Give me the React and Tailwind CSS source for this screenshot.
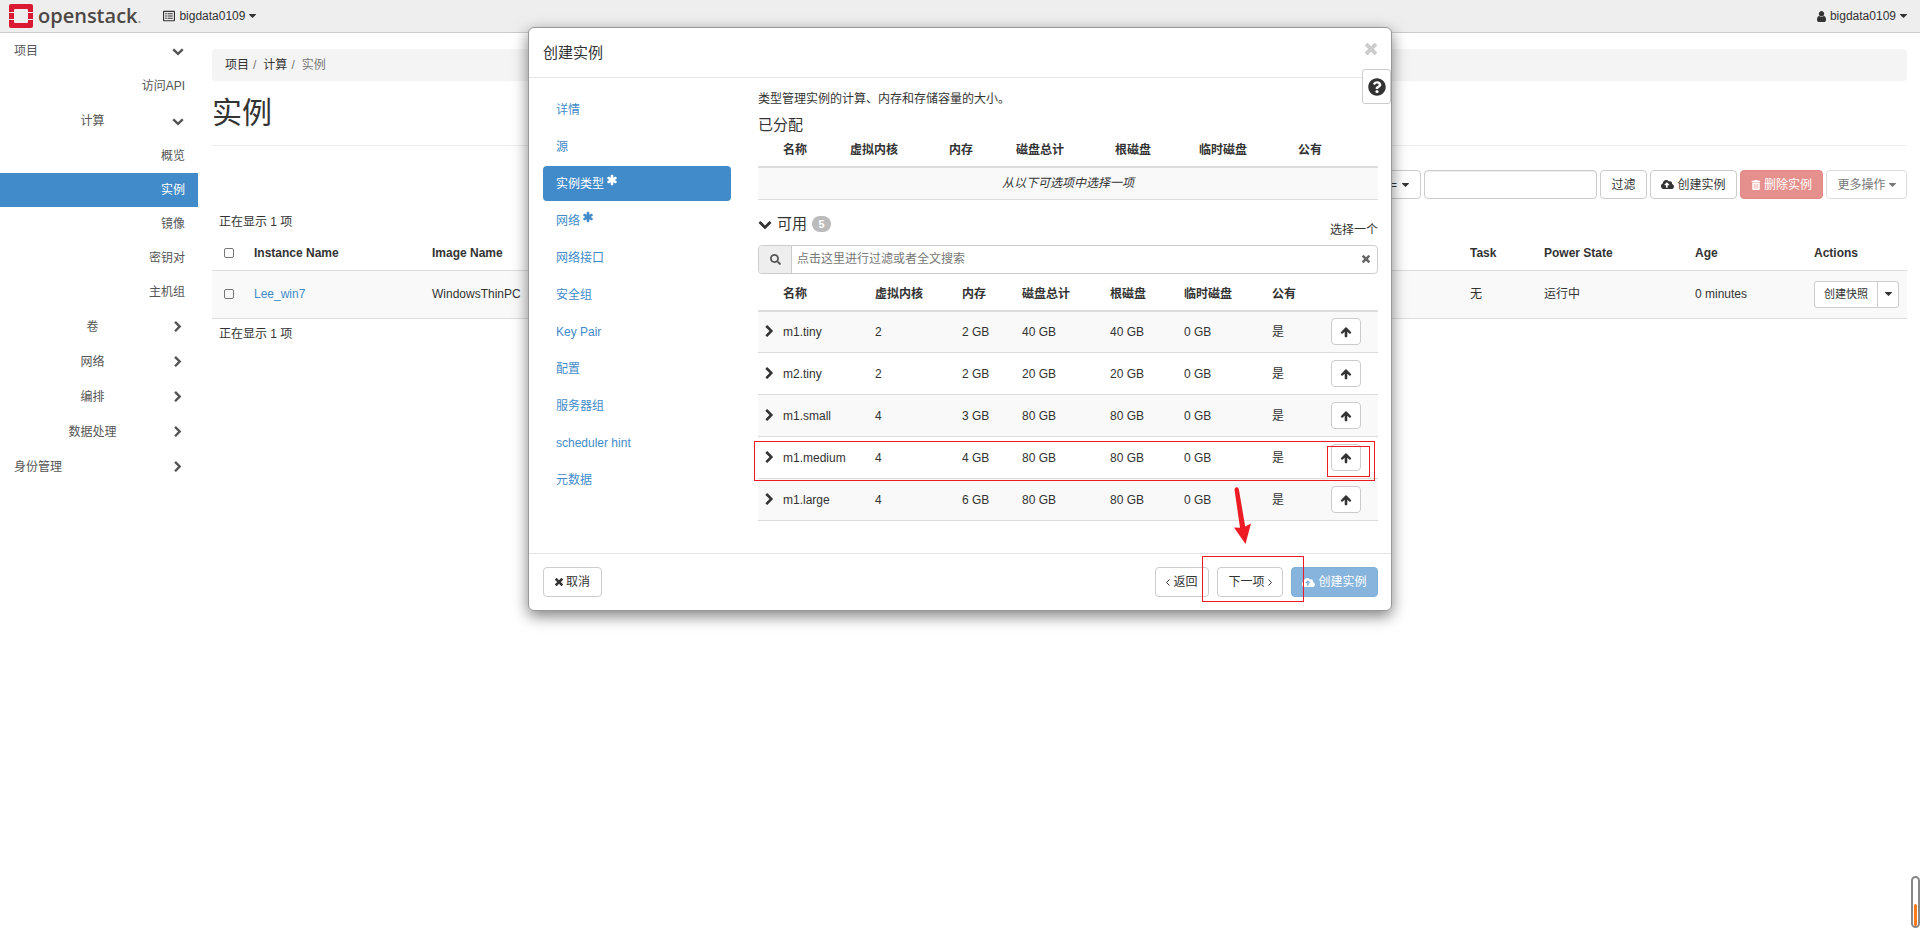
import React, { useState } from 'react';
import {
    FaCloudUploadAlt,
    FaQuestionCircle,
    FaRegListAlt,
    FaSearch,
    FaTrashAlt
} from 'react-icons/fa';

const menu = [
    { label: '项目', level: 'root', open: true },
    { label: '访问API', level: 'panel' },
    { label: '计算', level: 'group', open: true },
    { label: '概览', level: 'panel' },
    { label: '实例', level: 'leaf', active: true },
    { label: '镜像', level: 'leaf' },
    { label: '密钥对', level: 'leaf' },
    { label: '主机组', level: 'leaf' },
    { label: '卷', level: 'group' },
    { label: '网络', level: 'group' },
    { label: '编排', level: 'group' },
    { label: '数据处理', level: 'group' },
    { label: '身份管理', level: 'root' },
];

const steps = [
    { label: '详情' },
    { label: '源' },
    { label: '实例类型', required: true },
    { label: '网络', required: true },
    { label: '网络接口' },
    { label: '安全组' },
    { label: 'Key Pair' },
    { label: '配置' },
    { label: '服务器组' },
    { label: 'scheduler hint' },
    { label: '元数据' },
];

const flavors = [
    { name: 'm1.tiny', vcpus: 2, ram: '2 GB', total: '40 GB', root: '40 GB', ephemeral: '0 GB' },
    { name: 'm2.tiny', vcpus: 2, ram: '2 GB', total: '20 GB', root: '20 GB', ephemeral: '0 GB' },
    { name: 'm1.small', vcpus: 4, ram: '3 GB', total: '80 GB', root: '80 GB', ephemeral: '0 GB' },
    { name: 'm1.medium', vcpus: 4, ram: '4 GB', total: '80 GB', root: '80 GB', ephemeral: '0 GB' },
    { name: 'm1.large', vcpus: 4, ram: '6 GB', total: '80 GB', root: '80 GB', ephemeral: '0 GB' },
];

const flavorHeaders = ['名称', '虚拟内核', '内存', '磁盘总计', '根磁盘', '临时磁盘', '公有'];

// Font Awesome 4 shapes, heavier than the ones in react-icons
const Icon = ({ d, box = '0 0 1792 1792', w, h = w, className = '' }) => (
    <svg width={w} height={h} viewBox={box} fill="currentColor" className={`shrink-0 ${className}`} aria-hidden="true">
        <path d={d} />
    </svg>
);

const Caret = () => (
    <Icon w={7} h={4} box="384 640 1024 576" d="M1408 704q0 26-19 45l-448 448q-19 19-45 19t-45-19l-448-448q-19-19-19-45t19-45 45-19h896q26 0 45 19t19 45z" />
);

const ChevronDown = ({ size = 11 }) => (
    <Icon w={size} d="M1683 808l-742 741q-19 19-45 19t-45-19l-742-741q-19-19-19-45.500t19-45.500l166-165q19-19 45-19t45 19l531 531 531-531q19-19 45-19t45 19l166 165q19 19 19 45.500t-19 45.500z" />
);

const ChevronRight = ({ size = 12 }) => (
    <Icon w={size} d="M1363 877l-742 742q-19 19-45 19t-45-19l-166-166q-19-19-19-45t19-45l531-531-531-531q-19-19-19-45t19-45l166-166q19-19 45-19t45 19l742 742q19 19 19 45t-19 45z" />
);

const Times = ({ size = 8 }) => (
    <Icon w={size} box="302 366 1188 1188" d="M1490 1322q0 40-28 68l-136 136q-28 28-68 28t-68-28l-294-294-294 294q-28 28-68 28t-68-28l-136-136q-28-28-28-68t28-68l294-294-294-294q-28-28-28-68t28-68l136-136q28-28 68-28t68 28l294 294 294-294q28-28 68-28t68 28l136 136q28 28 28 68t-28 68l-294 294 294 294q28 28 28 68z" />
);

const ArrowUp = () => (
    <Icon w={12} d="M1675 971q0 51-37 90l-75 75q-38 38-91 38-54 0-90-38l-294-293v704q0 52-37.500 84.500t-90.500 32.500h-128q-53 0-90.500-32.500t-37.500-84.500v-704l-294 293q-36 38-90 38t-90-38l-75-75q-38-38-38-90 0-53 38-91l651-651q35-37 90-37 54 0 91 37l651 651q37 39 37 91z" />
);

const Asterisk = () => (
    <Icon w={12} className="mb-[7px]" d="M1546 1050q46 26 59.500 77.500t-12.500 97.500l-64 110q-26 46-77.500 59.500t-97.500-12.500l-266-153v307q0 52-38 90t-90 38h-128q-52 0-90-38t-38-90v-307l-266 153q-46 26-97.500 12.500t-77.500-59.500l-64-110q-26-46-12.500-97.500t59.500-77.500l266-154-266-154q-46-26-59.500-77.500t12.500-97.500l64-110q26-46 77.500-59.500t97.500 12.500l266 153v-307q0-52 38-90t90-38h128q52 0 90 38t38 90v307l266-153q46-26 97.500-12.500t77.500 59.500l64 110q26 46 12.500 97.500t-59.500 77.500l-266 154z" />
);

const User = () => (
    <Icon w={9} h={11} box="256 128 1280 1536" d="M1536 1399q0 109-62.500 187t-150.500 78h-854q-88 0-150.500-78t-62.500-187q0-85 8.500-160.500t31.500-152 58.500-131 94-89 134.500-34.500q131 128 313 128t313-128q76 0 134.500 34.500t94 89 58.500 131 31.500 152 8.500 160.500zm-256-887q0 159-112.500 271.500t-271.500 112.500-271.500-112.500-112.500-271.500 112.500-271.500 271.500-112.500 271.500 112.500 112.500 271.500z" />
);

const Angle = ({ d }) => (
    <svg width="4" height="7" viewBox="0 0 4 7" fill="none" stroke="currentColor" aria-hidden="true"><path d={d} /></svg>
);

const Btn = ({ children, className = '', ...rest }) => (
    <button
        type="button"
        className={`flex items-center justify-center gap-[3px] rounded border whitespace-nowrap ${className}`}
        {...rest}
    >
        {children}
    </button>
);

const Navbar = () => (
    <header className="flex h-[33px] items-center justify-between border-b border-[#ccc] bg-[#eee] pr-[13px] pl-[9px]">
        <div className="flex items-center">
            <a href="#" className="flex items-center gap-[5px]">
                <Logo />
                <span className="font-['Open_Sans'] text-[20px] leading-6 font-semibold text-[#4d4845]">
                    openstack<span className="text-sm text-[#999]">.</span>
                </span>
            </a>
            <button type="button" className="ml-[22px] flex items-center gap-1">
                <FaRegListAlt size={12} />
                bigdata0109
                <Caret />
            </button>
        </div>
        <button type="button" className="flex items-center gap-1">
            <User />
            bigdata0109
            <Caret />
        </button>
    </header>
);

const Logo = () => (
    <svg width="24" height="24" viewBox="0 0 24 24" fill="#da1a32">
        <path d="M2 0h20a2 2 0 0 1 2 2v6h-5V6a1 1 0 0 0-1-1H6a1 1 0 0 0-1 1v2H0V2a2 2 0 0 1 2-2z" />
        <path d="M0 9h5v6H0zM19 9h5v6h-5z" />
        <path d="M0 16h5v2a1 1 0 0 0 1 1h12a1 1 0 0 0 1-1v-2h5v6a2 2 0 0 1-2 2H2a2 2 0 0 1-2-2z" />
    </svg>
);

const Sidebar = () => (
    <nav className="w-[198px] shrink-0 text-[#555]">
        {menu.map((item) => {
            if (item.level === 'panel' || item.level === 'leaf') {
                return (
                    <a
                        key={item.label}
                        href="#"
                        className={`flex items-center justify-end pr-[13px] ${item.level === 'leaf' ? 'h-[34px]' : 'h-[35px]'} ${item.active ? 'bg-[#428bca] text-white' : ''}`}
                    >
                        {item.label}
                    </a>
                );
            }
            return (
                <a key={item.label} href="#" className="grid h-[35px] grid-cols-[14px_1fr_14px] items-center pr-[13px]">
                    <span className={item.level === 'root' ? 'col-start-2' : 'col-start-2 text-center'}>{item.label}</span>
                    <span className="flex justify-center">
                        {item.open ? <ChevronDown size={12} /> : <ChevronRight />}
                    </span>
                </a>
            );
        })}
    </nav>
);

const Toolbar = () => (
    <div className="mt-6 flex h-[29px] items-stretch justify-end gap-[3px]">
        <Btn className="border-[#ccc] bg-white px-[11px]">
            <span className="mr-0.5">实例 ID =</span> <Caret />
        </Btn>
        <input type="text" aria-label="过滤" className="w-[173px] rounded border border-[#ccc] bg-white px-3 shadow-[inset_0_1px_1px_rgba(0,0,0,0.075)]" />
        <Btn className="w-[47px] border-[#ccc] bg-white">过滤</Btn>
        <Btn className="w-[87px] border-[#ccc] bg-white">
            <FaCloudUploadAlt size={13} /> 创建实例
        </Btn>
        <Btn className="w-[83px] border-[#e38885] bg-[#e6908d] text-white" disabled>
            <FaTrashAlt size={10} /> 删除实例
        </Btn>
        <Btn className="w-[81px] border-[#ddd] bg-white text-[#777]" disabled>
            更多操作 <Caret />
        </Btn>
    </div>
);

const Instances = () => (
    <main className="min-w-0 flex-1 pt-4 pr-[13px] pl-3.5">
        <ol className="flex h-8 items-center rounded bg-[#f4f4f4] px-[13px]">
            <li><a href="#">项目</a><span className="px-1 text-[#777]">/</span></li>
            <li className="pl-[3px]"><a href="#">计算</a><span className="px-1 text-[#777]">/</span></li>
            <li className="pl-[3px] text-[#777]">实例</li>
        </ol>
        <h1 className="border-b border-[#eee] pt-2.5 pb-2.5 text-[30px] leading-[44px]">实例</h1>
        <Toolbar />
        <p className="mt-[13px] px-[7px] leading-5">正在显示 1 项</p>
        <table className="w-full table-fixed border-collapse text-left">
            <colgroup>
                <col className="w-[34px]" />
                <col className="w-[178px]" />
                <col />
                <col className="w-[74px]" />
                <col className="w-[151px]" />
                <col className="w-[119px]" />
                <col className="w-[101px]" />
            </colgroup>
            <thead>
                <tr className="h-[38px] border-b border-[#ddd]">
                    <th className="pt-1 pl-3"><input type="checkbox" aria-label="全选" className="block size-2.5 appearance-none rounded-[2px] border border-[#767676]" /></th>
                    <th className="pt-1 pl-2">Instance Name</th>
                    <th className="pt-1 pl-2">Image Name</th>
                    <th className="pt-1 pl-2">Task</th>
                    <th className="pt-1 pl-2">Power State</th>
                    <th className="pt-1 pl-2">Age</th>
                    <th className="pt-1 pl-2">Actions</th>
                </tr>
            </thead>
            <tbody>
                <tr className="h-12 border-b border-[#ddd] bg-[#f9f9f9]">
                    <td className="pl-3"><input type="checkbox" aria-label="Lee_win7" className="block size-2.5 appearance-none rounded-[2px] border border-[#767676]" /></td>
                    <td className="pl-2"><a href="#" className="text-[#428bca]">Lee_win7</a></td>
                    <td className="pl-2">WindowsThinPC</td>
                    <td className="pl-2">无</td>
                    <td className="pl-2">运行中</td>
                    <td className="pl-2">0 minutes</td>
                    <td className="pl-2">
                        <div className="flex h-[27px] text-[11px]">
                            <button type="button" className="w-16 rounded-l-[3px] border border-[#ccc] bg-white whitespace-nowrap">创建快照</button>
                            <button type="button" aria-label="更多" className="-ml-px flex w-[22px] items-center justify-center rounded-r-[3px] border border-[#ccc] bg-white">
                                <Caret />
                            </button>
                        </div>
                    </td>
                </tr>
            </tbody>
        </table>
        <p className="mt-[5px] px-[7px] leading-5">正在显示 1 项</p>
    </main>
);

const AllocatedTable = () => (
    <table className="w-full table-fixed border-collapse text-left">
        <colgroup>
            <col className="w-[25px]" />
            <col className="w-[67px]" />
            <col className="w-[99px]" />
            <col className="w-[67px]" />
            <col className="w-[99px]" />
            <col className="w-[84px]" />
            <col className="w-[99px]" />
            <col />
        </colgroup>
        <thead>
            <tr className="h-[30px] border-b-2 border-[#ddd]">
                <th />
                {flavorHeaders.map((h) => <th key={h} className="pb-1">{h}</th>)}
            </tr>
        </thead>
        <tbody>
            <tr className="h-8 border-b border-[#ddd] bg-[#f9f9f9]">
                <td colSpan={8} className="text-center italic">从以下可选项中选择一项</td>
            </tr>
        </tbody>
    </table>
);

const AvailableTable = () => (
    <table className="w-full table-fixed border-collapse text-left">
        <colgroup>
            <col className="w-[25px]" />
            <col className="w-[92px]" />
            <col className="w-[87px]" />
            <col className="w-[60px]" />
            <col className="w-[88px]" />
            <col className="w-[74px]" />
            <col className="w-[88px]" />
            <col className="w-[59px]" />
            <col />
        </colgroup>
        <thead>
            <tr className="h-[37px] border-b-2 border-[#ddd]">
                <th />
                {flavorHeaders.map((h) => <th key={h} className="pt-1">{h}</th>)}
                <th />
            </tr>
        </thead>
        <tbody>
            {flavors.map((f) => (
                <tr key={f.name} className="h-[42px] border-b border-[#ddd] odd:bg-[#f9f9f9]">
                    <td className="pl-[5px]"><ChevronRight size={13} /></td>
                    <td>{f.name}</td>
                    <td>{f.vcpus}</td>
                    <td>{f.ram}</td>
                    <td>{f.total}</td>
                    <td>{f.root}</td>
                    <td>{f.ephemeral}</td>
                    <td>是</td>
                    <td>
                        <Btn aria-label={`分配 ${f.name}`} className="h-[27px] w-[30px] border-[#ccc] bg-white">
                            <ArrowUp />
                        </Btn>
                    </td>
                </tr>
            ))}
        </tbody>
    </table>
);

// red marks drawn over the dialog
const Marks = () => (
    <div className="pointer-events-none absolute inset-0">
        <div className="absolute top-[413px] left-[225px] h-10 w-[621px] border border-[#ed1c24]" />
        <div className="absolute top-[418px] left-[798px] h-[31px] w-[43px] border border-[#ed1c24]" />
        <div className="absolute top-[528px] left-[673px] h-[46px] w-[102px] border border-[#ed1c24]" />
        <svg className="absolute top-[456px] left-[700px]" width="26" height="62" viewBox="0 0 26 62" fill="#ed1c24">
            <path d="M5.500 5.500a2.200 2.200 0 0 1 4.300-.6L16.200 42.500l5.800-3-5.500 20.500L5 43.500l6 .3z" />
        </svg>
    </div>
);

const LaunchDialog = () => {
    const [step, setStep] = useState('实例类型');

    return (
        <div className="absolute inset-x-0 top-0 flex justify-center pt-[27px]">
            <div role="dialog" aria-label="创建实例" className="relative w-[864px] rounded-md border border-[#999] bg-white shadow-[0_5px_15px_rgba(0,0,0,0.5)]">
                <div className="flex h-[50px] items-start justify-between border-b border-[#e5e5e5] px-3.5">
                    <h2 className="pt-[15px] text-[15px] leading-5">创建实例</h2>
                    <button type="button" aria-label="关闭" className="mt-[15px] text-[#ccc]"><Times size={12} /></button>
                </div>
                <button type="button" aria-label="帮助" className="absolute top-[41px] right-0 flex h-[35px] w-[29px] items-center justify-center rounded-[3px] border border-[#ccc] bg-white">
                    <FaQuestionCircle size={18} />
                </button>

                <div className="flex pt-2.5 pr-[13px] pb-8 pl-3.5">
                    <ul className="mt-1 flex w-[188px] shrink-0 flex-col gap-0.5">
                        {steps.map((s) => (
                            <li key={s.label}>
                                <a
                                    href="#"
                                    onClick={() => setStep(s.label)}
                                    className={`flex h-[35px] items-center gap-0.5 rounded px-[13px] ${s.label === step ? 'bg-[#428bca] text-white' : 'text-[#428bca]'}`}
                                >
                                    {s.label}
                                    {s.required && <Asterisk />}
                                </a>
                            </li>
                        ))}
                    </ul>

                    <div className="ml-[27px] min-w-0 flex-1">
                        <p className="leading-[22px]">类型管理实例的计算、内存和存储容量的大小。</p>
                        <h3 className="pt-[3px] text-[15px] leading-6">已分配</h3>
                        <AllocatedTable />
                        <div className="flex h-[45px] items-start justify-between">
                            <button type="button" className="flex items-center gap-[5px] pt-3.5 text-[15px] leading-5">
                                <ChevronDown size={14} />
                                可用
                                <span className="flex h-4 w-[19px] items-center justify-center rounded-full bg-[#bbb] text-[11px] font-bold text-white">5</span>
                            </button>
                            <span className="pt-5 leading-5">选择一个</span>
                        </div>
                        <div className="flex h-[29px] items-stretch rounded border border-[#ccc]">
                            <span className="flex w-[33px] items-center justify-center rounded-l border-r border-[#ccc] bg-[#eee] text-[#555]"><FaSearch size={11} /></span>
                            <input type="text" aria-label="搜索" placeholder="点击这里进行过滤或者全文搜索" className="min-w-0 flex-1 px-[5px] placeholder:text-[#777]" />
                            <button type="button" aria-label="清除" className="px-[7px] text-[#666]"><Times /></button>
                        </div>
                        <AvailableTable />
                    </div>
                </div>

                <div className="flex gap-2 border-t border-[#e5e5e5] py-[13px] pr-[13px] pl-3.5">
                    <Btn className="mr-auto h-[30px] w-[59px] border-[#ccc]"><Times />取消</Btn>
                    <Btn className="h-[30px] w-[54px] border-[#ccc]"><Angle d="M3.500.5l-3 3 3 3" />返回</Btn>
                    <Btn className="h-[30px] w-[66px] border-[#ccc]">下一项<Angle d="M.5.5l3 3-3 3" /></Btn>
                    <Btn className="h-[30px] w-[87px] border-[#7fafd9] bg-[#86b4dc] text-white" disabled><FaCloudUploadAlt size={13} />创建实例</Btn>
                </div>
                <Marks />
            </div>
        </div>
    );
};

const App = () => (
    <div className="relative min-h-screen overflow-hidden bg-white font-['Liberation_Sans','Noto_Sans_CJK_SC',sans-serif] text-xs text-[#333]">
        <Navbar />
        <div className="flex">
            <Sidebar />
            <Instances />
        </div>
        <LaunchDialog />
        <div className="absolute right-0 bottom-[18px] flex h-[52px] w-[9px] items-end justify-center rounded-full border-2 border-[#888] bg-white">
            <div className="h-[22px] w-[3px] rounded-full bg-[#ff7a1a]" />
        </div>
    </div>
);

export default App;
